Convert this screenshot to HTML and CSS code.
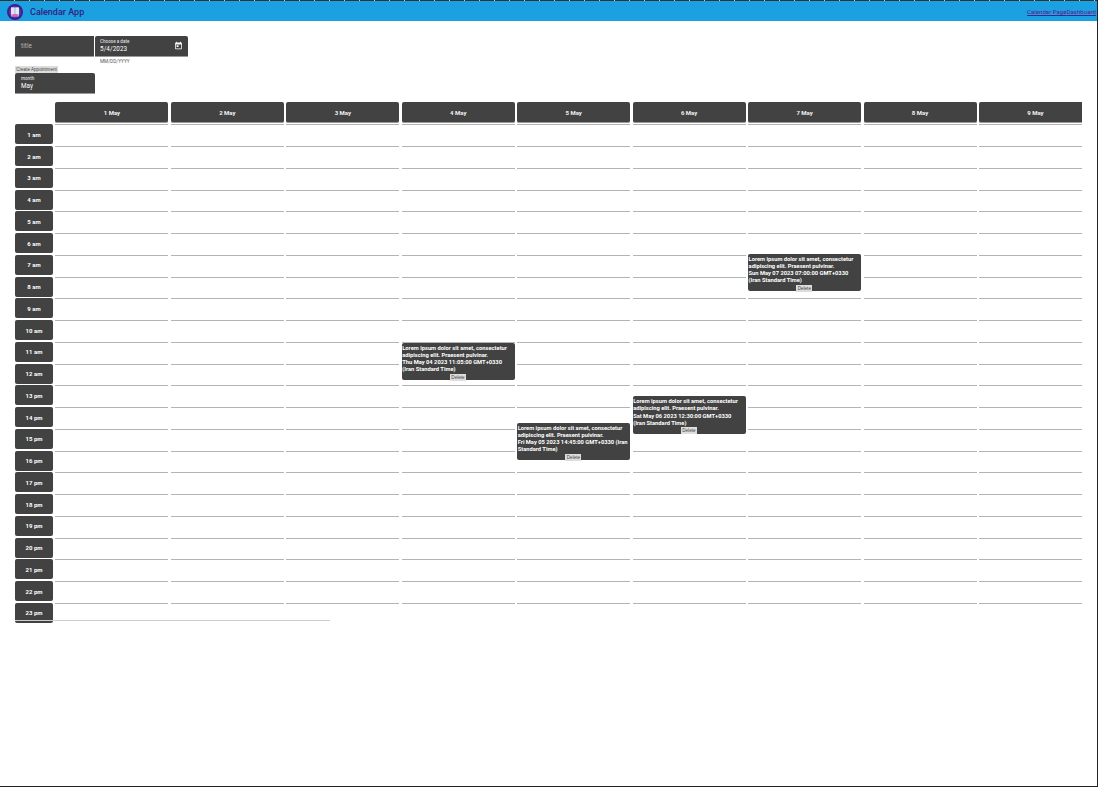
FILE: index.html
```html
<!DOCTYPE html>
<html lang="en">
  <head>
    <meta charset="UTF-8" />
    <title>Calendar App</title>
    <link rel="stylesheet" href="styles.css">
  </head>
  <body>
    <header class="topbar">
      <div class="brand">
        <svg class="logo" viewBox="0 0 16 16" aria-hidden="true">
          <circle cx="8" cy="8" r="8" fill="#3f1d8f" />
          <circle cx="8" cy="8" r="6" fill="#5b3aa6" />
          <rect x="4" y="3.5" width="8" height="9" fill="#6fb7e8" />
          <rect x="4" y="3.5" width="3.6" height="7" fill="#f3d9ef" />
          <rect x="8.4" y="3.5" width="3.6" height="7" fill="#d9ecf8" />
          <rect x="5.5" y="10" width="5" height="2.5" fill="#ec5fa8" />
        </svg>
        <span class="brand-name">Calendar App</span>
      </div>
      <nav class="links">
        <a href="#">Calendar Page</a><a href="#">Dashboard</a>
      </nav>
    </header>

    <main class="page">
      <form class="new-appointment">
        <div class="form-row">
          <div class="field field-title"><span class="value muted">title</span></div>
          <div class="date-group">
            <div class="field field-date">
              <span class="small-label">Choose a date</span>
              <span class="value">5/4/2023</span>
              <svg class="cal-icon" viewBox="0 0 24 24" aria-hidden="true">
                <path fill="#fff" d="M19 4h-1V2h-2v2H8V2H6v2H5a2 2 0 0 0-2 2v14a2 2 0 0 0 2 2h14a2 2 0 0 0 2-2V6a2 2 0 0 0-2-2zm0 16H5V9h14v11zM7 11h5v5H7z" />
              </svg>
            </div>
            <span class="helper">MM/DD/YYYY</span>
          </div>
        </div>
        <button type="button" class="btn-small create">Create Appointment</button>
        <div class="field field-month">
          <span class="small-label">month</span>
          <span class="value">May</span>
        </div>
      </form>

      <section class="calendar">
        <div class="row row-head">
          <div class="corner"></div>
          <div class="day">1 May</div><div class="day">2 May</div><div class="day">3 May</div><div class="day">4 May</div><div class="day">5 May</div><div class="day">6 May</div><div class="day">7 May</div><div class="day">8 May</div><div class="day">9 May</div>
        </div>
        <div class="row"><div class="hour">1 am</div><div class="cell"></div><div class="cell"></div><div class="cell"></div><div class="cell"></div><div class="cell"></div><div class="cell"></div><div class="cell"></div><div class="cell"></div><div class="cell"></div></div>
        <div class="row"><div class="hour">2 am</div><div class="cell"></div><div class="cell"></div><div class="cell"></div><div class="cell"></div><div class="cell"></div><div class="cell"></div><div class="cell"></div><div class="cell"></div><div class="cell"></div></div>
        <div class="row"><div class="hour">3 am</div><div class="cell"></div><div class="cell"></div><div class="cell"></div><div class="cell"></div><div class="cell"></div><div class="cell"></div><div class="cell"></div><div class="cell"></div><div class="cell"></div></div>
        <div class="row"><div class="hour">4 am</div><div class="cell"></div><div class="cell"></div><div class="cell"></div><div class="cell"></div><div class="cell"></div><div class="cell"></div><div class="cell"></div><div class="cell"></div><div class="cell"></div></div>
        <div class="row"><div class="hour">5 am</div><div class="cell"></div><div class="cell"></div><div class="cell"></div><div class="cell"></div><div class="cell"></div><div class="cell"></div><div class="cell"></div><div class="cell"></div><div class="cell"></div></div>
        <div class="row"><div class="hour">6 am</div><div class="cell"></div><div class="cell"></div><div class="cell"></div><div class="cell"></div><div class="cell"></div><div class="cell"></div><div class="cell"></div><div class="cell"></div><div class="cell"></div></div>
        <div class="row">
          <div class="hour">7 am</div><div class="cell"></div><div class="cell"></div><div class="cell"></div><div class="cell"></div><div class="cell"></div><div class="cell"></div>
          <div class="cell">
            <div class="event event-early">
              <p>Lorem ipsum dolor sit amet, consectetur adipiscing elit. Praesent pulvinar.</p>
              <p>Sun May 07 2023 07:00:00 GMT+0330 (Iran Standard Time)</p>
              <button type="button" class="btn-small">Delete</button>
            </div>
          </div>
          <div class="cell"></div><div class="cell"></div>
        </div>
        <div class="row"><div class="hour">8 am</div><div class="cell"></div><div class="cell"></div><div class="cell"></div><div class="cell"></div><div class="cell"></div><div class="cell"></div><div class="cell"></div><div class="cell"></div><div class="cell"></div></div>
        <div class="row"><div class="hour">9 am</div><div class="cell"></div><div class="cell"></div><div class="cell"></div><div class="cell"></div><div class="cell"></div><div class="cell"></div><div class="cell"></div><div class="cell"></div><div class="cell"></div></div>
        <div class="row"><div class="hour">10 am</div><div class="cell"></div><div class="cell"></div><div class="cell"></div><div class="cell"></div><div class="cell"></div><div class="cell"></div><div class="cell"></div><div class="cell"></div><div class="cell"></div></div>
        <div class="row">
          <div class="hour">11 am</div><div class="cell"></div><div class="cell"></div><div class="cell"></div>
          <div class="cell">
            <div class="event">
              <p>Lorem ipsum dolor sit amet, consectetur adipiscing elit. Praesent pulvinar.</p>
              <p>Thu May 04 2023 11:05:00 GMT+0330 (Iran Standard Time)</p>
              <button type="button" class="btn-small">Delete</button>
            </div>
          </div>
          <div class="cell"></div><div class="cell"></div><div class="cell"></div><div class="cell"></div><div class="cell"></div>
        </div>
        <div class="row"><div class="hour">12 am</div><div class="cell"></div><div class="cell"></div><div class="cell"></div><div class="cell"></div><div class="cell"></div><div class="cell"></div><div class="cell"></div><div class="cell"></div><div class="cell"></div></div>
        <div class="row">
          <div class="hour">13 pm</div><div class="cell"></div><div class="cell"></div><div class="cell"></div><div class="cell"></div><div class="cell"></div>
          <div class="cell">
            <div class="event event-half">
              <p>Lorem ipsum dolor sit amet, consectetur adipiscing elit. Praesent pulvinar.</p>
              <p>Sat May 06 2023 12:30:00 GMT+0330 (Iran Standard Time)</p>
              <button type="button" class="btn-small">Delete</button>
            </div>
          </div>
          <div class="cell"></div><div class="cell"></div><div class="cell"></div>
        </div>
        <div class="row"><div class="hour">14 pm</div><div class="cell"></div><div class="cell"></div><div class="cell"></div><div class="cell"></div><div class="cell"></div><div class="cell"></div><div class="cell"></div><div class="cell"></div><div class="cell"></div></div>
        <div class="row">
          <div class="hour">15 pm</div><div class="cell"></div><div class="cell"></div><div class="cell"></div><div class="cell"></div>
          <div class="cell">
            <div class="event event-late">
              <p>Lorem ipsum dolor sit amet, consectetur adipiscing elit. Praesent pulvinar.</p>
              <p>Fri May 05 2023 14:45:00 GMT+0330 (Iran Standard Time)</p>
              <button type="button" class="btn-small">Delete</button>
            </div>
          </div>
          <div class="cell"></div><div class="cell"></div><div class="cell"></div><div class="cell"></div>
        </div>
        <div class="row"><div class="hour">16 pm</div><div class="cell"></div><div class="cell"></div><div class="cell"></div><div class="cell"></div><div class="cell"></div><div class="cell"></div><div class="cell"></div><div class="cell"></div><div class="cell"></div></div>
        <div class="row"><div class="hour">17 pm</div><div class="cell"></div><div class="cell"></div><div class="cell"></div><div class="cell"></div><div class="cell"></div><div class="cell"></div><div class="cell"></div><div class="cell"></div><div class="cell"></div></div>
        <div class="row"><div class="hour">18 pm</div><div class="cell"></div><div class="cell"></div><div class="cell"></div><div class="cell"></div><div class="cell"></div><div class="cell"></div><div class="cell"></div><div class="cell"></div><div class="cell"></div></div>
        <div class="row"><div class="hour">19 pm</div><div class="cell"></div><div class="cell"></div><div class="cell"></div><div class="cell"></div><div class="cell"></div><div class="cell"></div><div class="cell"></div><div class="cell"></div><div class="cell"></div></div>
        <div class="row"><div class="hour">20 pm</div><div class="cell"></div><div class="cell"></div><div class="cell"></div><div class="cell"></div><div class="cell"></div><div class="cell"></div><div class="cell"></div><div class="cell"></div><div class="cell"></div></div>
        <div class="row"><div class="hour">21 pm</div><div class="cell"></div><div class="cell"></div><div class="cell"></div><div class="cell"></div><div class="cell"></div><div class="cell"></div><div class="cell"></div><div class="cell"></div><div class="cell"></div></div>
        <div class="row"><div class="hour">22 pm</div><div class="cell"></div><div class="cell"></div><div class="cell"></div><div class="cell"></div><div class="cell"></div><div class="cell"></div><div class="cell"></div><div class="cell"></div><div class="cell"></div></div>
        <div class="row"><div class="hour">23 pm</div><div class="cell"></div><div class="cell"></div><div class="cell"></div><div class="cell"></div><div class="cell"></div><div class="cell"></div><div class="cell"></div><div class="cell"></div><div class="cell"></div></div>
        <div class="end-line"></div>
      </section>
    </main>
  </body>
</html>
```

FILE: styles.css
```css
html {
  height: 100%;
}

body {
  box-sizing: border-box;
  height: 100%;
  margin: 0;
  overflow: hidden;
  border-right: 1px solid #222;
  border-bottom: 1px solid #222;
  background-color: #fff;
  font-family: Roboto, Arial, sans-serif;
}

.topbar {
  box-sizing: border-box;
  display: flex;
  justify-content: space-between;
  align-items: center;
  height: 21px;
  padding: 2px 0 0 7px;
  background: repeating-linear-gradient(90deg, #333 0 14px, #ccc 14px 15px) top / 100% 1px no-repeat, #1ba1e2;
}

.brand {
  display: flex;
  align-items: center;
  gap: 7px;
}

.logo {
  width: 16px;
  height: 16px;
}

.brand-name {
  font-size: 9px;
  font-weight: 500;
  color: #33207f;
}

.links {
  display: flex;
  padding-right: 1px;
  font-size: 6.1px;
}

.links a {
  color: #551a8b;
}

.page {
  padding: 15px 15px 0;
}

.form-row {
  display: flex;
  gap: 1px;
}

.field {
  position: relative;
  box-sizing: border-box;
  display: flex;
  flex-direction: column;
  justify-content: center;
  height: 21px;
  padding: 0 6px;
  border-bottom: 1px solid #999;
  background-color: #424242;
  color: #fff;
}

.field-title {
  width: 79px;
  border-radius: 2px 0 0 0;
}

.field-date {
  width: 93px;
  padding-left: 5px;
  border-radius: 2px 2px 0 0;
}

.field-month {
  width: 80px;
  border-radius: 2px 2px 0 0;
}

.small-label {
  font-size: 4.6px;
  font-weight: 500;
  line-height: 6px;
  color: #ddd;
}

.value {
  font-size: 6.3px;
  line-height: 9px;
  letter-spacing: 0.1px;
}

.muted {
  color: #bbb;
}

.cal-icon {
  position: absolute;
  top: 5px;
  right: 5px;
  width: 9px;
  height: 9px;
}

.helper {
  display: block;
  height: 9px;
  padding-left: 5px;
  font-size: 4.7px;
  line-height: 9px;
  color: #555;
}

.btn-small {
  display: block;
  height: 7px;
  padding: 0;
  border: 0;
  border-radius: 0;
  background-color: #ddd;
  font-family: "Liberation Sans", Arial, sans-serif;
  font-size: 4.6px;
  line-height: 7px;
  color: #444;
}

.create {
  width: 43px;
}

.calendar {
  position: relative;
  width: 1067px;
  margin-top: 8px;
  overflow: hidden;
}

.row {
  display: grid;
  grid-template-columns: 38px repeat(9, 113px);
  column-gap: 2.45px;
  height: 21.75px;
}

.row-head {
  height: 22.25px;
}

.day {
  display: flex;
  justify-content: center;
  align-items: center;
  height: 20px;
  border-bottom: 1px solid #999;
  border-radius: 2px;
  background-color: #424242;
  font-size: 6px;
  font-weight: 700;
  color: #f2f2f2;
}

.hour {
  display: flex;
  justify-content: center;
  align-items: center;
  height: 20px;
  border-radius: 2px;
  background-color: #424242;
  font-size: 6px;
  font-weight: 700;
  color: #fff;
}

.cell {
  position: relative;
  border-top: 1px solid #b4b4b4;
}

.event {
  position: absolute;
  z-index: 1;
  top: 0;
  left: 0;
  box-sizing: border-box;
  width: 113px;
  height: 37.5px;
  padding: 2px 1px 0 0.5px;
  border-radius: 2px;
  background-color: #424242;
  font-size: 5.75px;
  font-weight: 700;
  line-height: 7.2px;
  color: #fff;
}

.event p {
  margin: 0;
}

.event .btn-small {
  width: 16px;
  margin: 0 auto;
  font-weight: 400;
}

.event-early {
  top: -2px;
}

.event-half {
  top: 10px;
}

.event-late {
  top: -7px;
}

.end-line {
  position: absolute;
  top: 518px;
  left: 0;
  z-index: 1;
  width: 315px;
  height: 1px;
  background-color: #ccc;
}
```
